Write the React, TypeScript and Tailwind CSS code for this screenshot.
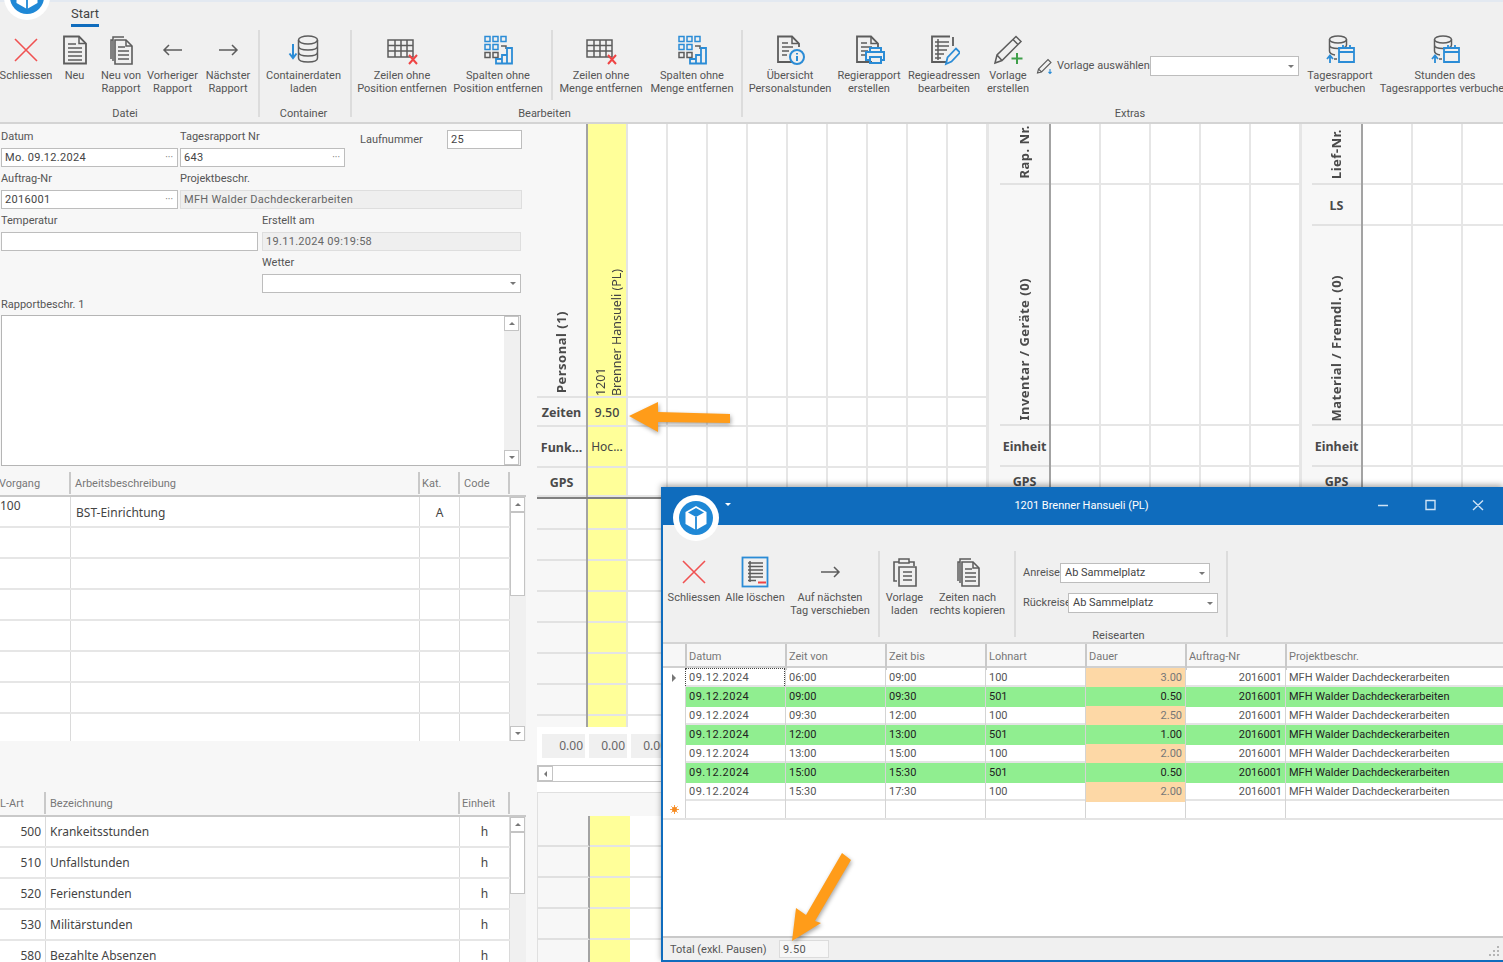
import React from 'react';

const G = '#5c5c5c';
const B = '#2b8cd6';
const R = '#ef4444';

const Svg: React.FC<{ children: React.ReactNode }> = ({ children }) => (
  <svg viewBox="0 0 32 32" className="w-8 h-8" fill="none" stroke={G} strokeWidth="1.5">
    {children}
  </svg>
);

const CloseIcon = () => (
  <Svg>
    <path d="M5 5L27 27M27 5L5 27" stroke="#f05252" strokeWidth="1.6" />
  </Svg>
);

const DocIcon = () => (
  <Svg>
    <path d="M5 2.5H20L27 9.5V29.5H5Z" strokeWidth="1.8" />
    <path d="M20 2.5V9.5H27M9 10H17M9 14H23M9 18H23M9 22H23M9 26H23" />
  </Svg>
);

const DocCopyIcon = () => (
  <Svg>
    <path d="M6 25V6H8M8 27V3H19" />
    <path d="M10 6H21L27 12V30H10Z" strokeWidth="1.6" />
    <path d="M21 6V12H27M13 13H20M13 17H24M13 21H24M13 25H24" />
  </Svg>
);

const ArrowLeftIcon = () => (
  <Svg>
    <path d="M7 16H25M12 11L7 16L12 21" />
  </Svg>
);

const ArrowRightIcon = () => (
  <Svg>
    <path d="M7 16H25M20 11L25 16L20 21" />
  </Svg>
);

const Database = () => (
  <>
    <ellipse cx="20" cy="6" rx="9.5" ry="4" />
    <path d="M10.5 6V24C10.5 26.5 14.5 28 20 28S29.5 26.5 29.5 24V6M10.5 12C10.5 14.5 14.5 16 20 16S29.5 14.5 29.5 12M10.5 18C10.5 20.5 14.5 22 20 22S29.5 20.5 29.5 18" />
  </>
);

const ContainerIcon = () => (
  <Svg>
    <Database />
    <path d="M5 10V23M1.5 19.5L5 24L8.5 19.5" stroke={B} strokeWidth="2" />
  </Svg>
);

const GridXIcon = () => (
  <Svg>
    <path d="M2 6H27V23H2ZM2 11.5H27M2 17H27M9 6V23M15 6V23M21 6V23" />
    <path d="M23 21L31 30M31 21L23 30" stroke={R} strokeWidth="2" />
  </Svg>
);

const GridBarsIcon = () => (
  <Svg>
    <g stroke={B}>
      <rect x="3" y="2.5" width="5" height="5" />
      <rect x="11" y="2.5" width="5" height="5" />
      <rect x="19" y="2.5" width="5" height="5" />
      <rect x="3" y="10.5" width="5" height="5" />
      <rect x="11" y="10.5" width="5" height="5" />
      <rect x="3" y="18.5" width="5" height="5" stroke={G} />
      <rect x="11" y="18.5" width="5" height="5" stroke={G} />
      <path d="M19 12H24V15" stroke={G} />
      <path d="M14 29.5H30V14H25V21H20V25H14Z M20 25V29.5M25 21V29.5" strokeWidth="1.8" />
    </g>
  </Svg>
);

const PageBase = () => (
  <>
    <path d="M19 28H4V2.5H18L25 9.5V13" strokeWidth="1.8" />
    <path d="M18 2.5V9.5H25M8 9H14M8 13H19M8 17H15M8 21H13" />
  </>
);

const InfoDocIcon = () => (
  <Svg>
    <PageBase />
    <circle cx="23" cy="23" r="7" stroke={B} strokeWidth="2" />
    <path d="M23 22V27M23 19V20.5" stroke={B} strokeWidth="2" />
  </Svg>
);

const PrintDocIcon = () => (
  <Svg>
    <PageBase />
    <path d="M17 18V14H28V18M17 26H13V18H31V26H28M17 23H28V29H17Z" stroke={B} strokeWidth="2" />
  </Svg>
);

const EditDocIcon = () => (
  <Svg>
    <path d="M22 2.5H4V28H18M25 3V12" strokeWidth="1.8" />
    <path d="M7 8H21M7 12H21M7 16H19M7 20H16M7 24H13M10 5V26" />
    <path d="M18 30L19.5 23.5L28 14.5L32 18.5L23.5 27.5Z" stroke={B} strokeWidth="1.8" />
  </Svg>
);

const PencilPlusIcon = () => (
  <Svg>
    <path d="M3 29L5 21L24 2.5L29 7.5L10 26.5ZM5 21L10 26.5M21 5.5L26 10.5" />
    <path d="M25 19V30M19.5 24.5H30.5" stroke="#3f9f4a" strokeWidth="2" />
  </Svg>
);

const SmallPencilIcon = () => (
  <svg viewBox="0 0 18 18" className="w-[18px] h-[18px] shrink-0" fill="none" stroke={G} strokeWidth="1.1">
    <path d="M1.5 16L2.5 12L12 2.5L15 5.5L5.5 15ZM2.5 12L5.5 15" />
    <path d="M14 12V16.5M12.5 15L14 16.5L15.5 15" stroke={B} />
  </svg>
);

const DbCalendarIcon = () => (
  <Svg>
    <ellipse cx="14" cy="5.5" rx="8.5" ry="3.5" />
    <path d="M5.5 5.5V17C5.5 19 8 20.5 11 21M22.5 5.5V11M5.5 11C5.5 13 9 14.5 14 14.5S22.5 13 22.5 11" />
    <path d="M15 14H30V28H15ZM15 18H30M19 11V15M26 11V15" stroke={B} strokeWidth="1.8" />
    <path d="M6 22V29M3 25L6 21.5L9 25" stroke={B} strokeWidth="1.8" />
    <path d="M10 25H13" />
  </Svg>
);

const ListMinusIcon = () => (
  <Svg>
    <rect x="3.5" y="1.5" width="25" height="29" stroke={B} strokeWidth="1.8" />
    <path d="M9 7H24M9 10.5H24M9 14H24M9 17.5H24M9 21H24M9 24.5H17M11 5V26" />
    <path d="M19 26.5H27" stroke={R} strokeWidth="2" />
  </Svg>
);

const ClipboardIcon = () => (
  <Svg>
    <path d="M8 25H5V6H10M20 6H25V10" strokeWidth="1.6" />
    <path d="M10 7V3H20V7Z" />
    <path d="M10 11H27V30H10Z" strokeWidth="1.6" />
    <path d="M14 16H23M14 20H23M14 24H23" />
  </Svg>
);

const AppLogo = () => (
  <svg viewBox="0 0 46 46" className="w-[46px] h-[46px]">
    <circle cx="23" cy="23" r="23" fill="#fff" />
    <circle cx="23" cy="23" r="17" fill="#1f88d6" />
    <path d="M23 11L33.5 17V29L23 35L12.5 29V17Z" fill="#fff" />
    <path d="M23 13L31 17.5L23 22L15 17.5Z" fill="#1f88d6" />
    <path d="M23 22V35" stroke="#1f88d6" strokeWidth="1.8" />
  </svg>
);

const Sep: React.FC<{ className?: string }> = ({ className = 'h-[87px]' }) => (
  <div className={`w-[2px] shrink-0 bg-[#dcdcdc] ${className}`} />
);

const RibbonButton: React.FC<{ icon: React.ReactNode; lines: string[]; className: string }> = ({ icon, lines, className }) => (
  <div className={`flex flex-col items-center shrink-0 whitespace-nowrap ${className}`}>
    <div className="h-8 flex items-center justify-center">{icon}</div>
    <div className="mt-[3px] leading-[13px] text-center text-[#555]">
      {lines.map((l) => (
        <div key={l}>{l}</div>
      ))}
    </div>
  </div>
);

const GroupLabel: React.FC<{ className?: string; children: React.ReactNode }> = ({ className = '', children }) => (
  <div className={`h-[17px] leading-[17px] text-center text-[#555] ${className}`}>{children}</div>
);

const Combo: React.FC<{ value?: string; className: string }> = ({ value, className }) => (
  <div className={`flex items-center justify-between bg-white border border-[#bdbdbd] px-[4px] text-[#444] ${className}`}>
    <span>{value}</span>
    <span className="w-0 h-0 border-x-[3px] border-x-transparent border-t-[3px] border-t-[#777]" />
  </div>
);

const Ribbon = () => (
  <div className="h-[124px] bg-[#f0f0f0] border-b-2 border-[#d4d4d4] overflow-hidden shrink-0">
    <div className="h-[2px] bg-[#e3e9f1]" />
    <div className="h-[28px] pl-[71px]">
      <div className="inline-block text-[13px] leading-[20px] mt-[2px] text-[#444] border-b-[3px] border-[#0f6cbd]">Start</div>
    </div>
    <div className="flex w-[1560px]">
      <div className="w-[258px] shrink-0">
        <div className="flex h-[71px] pt-[4px]">
          <RibbonButton className="w-[52px]" icon={<CloseIcon />} lines={['Schliessen']} />
          <RibbonButton className="w-[45px]" icon={<DocIcon />} lines={['Neu']} />
          <RibbonButton className="w-[48px]" icon={<DocCopyIcon />} lines={['Neu von', 'Rapport']} />
          <RibbonButton className="w-[55px]" icon={<ArrowLeftIcon />} lines={['Vorheriger', 'Rapport']} />
          <RibbonButton className="w-[56px]" icon={<ArrowRightIcon />} lines={['Nächster', 'Rapport']} />
        </div>
        <div className="mt-[4px]"><GroupLabel className="w-[250px]">Datei</GroupLabel></div>
      </div>
      <Sep />
      <div className="w-[90px] shrink-0">
        <div className="h-[71px] pt-[4px]">
          <RibbonButton className="w-[87px]" icon={<ContainerIcon />} lines={['Containerdaten', 'laden']} />
        </div>
        <div className="mt-[4px]"><GroupLabel className="w-[87px]">Container</GroupLabel></div>
      </div>
      <Sep />
      <div className="w-[389px] shrink-0">
        <div className="flex h-[71px] pt-[4px]">
          <RibbonButton className="w-[100px]" icon={<GridXIcon />} lines={['Zeilen ohne', 'Position entfernen']} />
          <RibbonButton className="w-[92px]" icon={<GridBarsIcon />} lines={['Spalten ohne', 'Position entfernen']} />
          <div className="w-[7px]" />
          <Sep className="h-[70px] -mt-[4px]" />
          <RibbonButton className="w-[96px]" icon={<GridXIcon />} lines={['Zeilen ohne', 'Menge entfernen']} />
          <RibbonButton className="w-[86px]" icon={<GridBarsIcon />} lines={['Spalten ohne', 'Menge entfernen']} />
        </div>
        <div className="mt-[4px]"><GroupLabel className="w-[385px]">Bearbeiten</GroupLabel></div>
      </div>
      <Sep />
      <div className="w-[776px] shrink-0">
        <div className="flex h-[71px] pt-[4px] pl-[5px]">
          <RibbonButton className="w-[84px]" icon={<InfoDocIcon />} lines={['Übersicht', 'Personalstunden']} />
          <RibbonButton className="w-[74px]" icon={<PrintDocIcon />} lines={['Regierapport', 'erstellen']} />
          <RibbonButton className="w-[76px]" icon={<EditDocIcon />} lines={['Regieadressen', 'bearbeiten']} />
          <RibbonButton className="w-[52px]" icon={<PencilPlusIcon />} lines={['Vorlage', 'erstellen']} />
          <div className="w-[268px] shrink-0 flex items-center h-[20px] mt-[22px] pl-[2px] text-[#555]">
            <SmallPencilIcon />
            <span className="ml-[3px] w-[93px] whitespace-nowrap">Vorlage auswählen</span>
            <Combo className="w-[149px] h-[20px]" />
          </div>
          <RibbonButton className="w-[76px]" icon={<DbCalendarIcon />} lines={['Tagesrapport', 'verbuchen']} />
          <RibbonButton className="w-[134px]" icon={<DbCalendarIcon />} lines={['Stunden des', 'Tagesrapportes verbuchen']} />
        </div>
        <div className="mt-[4px]"><GroupLabel className="w-[774px]">Extras</GroupLabel></div>
      </div>
    </div>
  </div>
);

const FieldLabel: React.FC<{ children: React.ReactNode }> = ({ children }) => (
  <div className="h-[23px] pt-[2px] flex items-center whitespace-nowrap text-[#555]">{children}</div>
);

const Input: React.FC<{ value?: string; dots?: boolean; readOnly?: boolean; className?: string }> = ({ value, dots, readOnly, className = '' }) => (
  <div
    className={`h-[19px] flex items-center justify-between px-[3px] border tracking-[0.3px] leading-none whitespace-nowrap ${
      readOnly ? 'bg-[#efefef] border-[#dedede] text-[#666]' : 'bg-white border-[#bdbdbd] text-[#444]'
    } ${className}`}
  >
    <span>{value}</span>
    {dots && <span className="text-[#777] text-[10px] tracking-[0px] pr-[1px]">···</span>}
  </div>
);

const ScrollButton: React.FC<{ dir: 'up' | 'down' | 'left' }> = ({ dir }) => (
  <div className="w-[15px] h-[15px] shrink-0 bg-white border border-[#c4c4c4] flex items-center justify-center">
    {dir === 'up' && <span className="w-0 h-0 border-x-[3px] border-x-transparent border-b-[3px] border-b-[#777]" />}
    {dir === 'down' && <span className="w-0 h-0 border-x-[3px] border-x-transparent border-t-[3px] border-t-[#777]" />}
    {dir === 'left' && <span className="w-0 h-0 border-y-[3px] border-y-transparent border-r-[3px] border-r-[#777]" />}
  </div>
);

const VScroll: React.FC<{ thumb: string }> = ({ thumb }) => (
  <div className="w-[16px] shrink-0 bg-[#f0f0f0] flex flex-col">
    <ScrollButton dir="up" />
    <div className={`w-[15px] bg-white border border-[#c4c4c4] ${thumb}`} />
    <div className="flex-1" />
    <ScrollButton dir="down" />
  </div>
);

const HeadCell: React.FC<{ className: string; children?: React.ReactNode }> = ({ className, children }) => (
  <div className={`h-[22px] shrink-0 pl-[4px] border-r-2 border-[#c9c9c9] leading-[24px] text-[#777] whitespace-nowrap overflow-hidden ${className}`}>
    {children}
  </div>
);

const Cell: React.FC<{ className: string; children?: React.ReactNode }> = ({ className, children }) => (
  <div className={`h-full shrink-0 border-r border-[#dadada] flex items-center font-['Noto_Sans'] text-[12px] text-[#444] whitespace-nowrap ${className}`}>
    {children}
  </div>
);

const LeftPanel = () => {
  const emptyRows = [0, 1, 2, 3, 4, 5, 6];
  const lohnarten = [
    ['500', 'Krankeitsstunden'],
    ['510', 'Unfallstunden'],
    ['520', 'Ferienstunden'],
    ['530', 'Militärstunden'],
    ['580', 'Bezahlte Absenzen'],
  ];
  return (
    <div className="w-[537px] shrink-0 bg-[#f7f7f7] overflow-hidden">
      <div className="pl-[1px] pt-[1px]">
        <div className="flex h-[42px]">
          <div className="w-[177px]">
            <FieldLabel>Datum</FieldLabel>
            <Input value="Mo. 09.12.2024" dots />
          </div>
          <div className="w-[165px] ml-[2px]">
            <FieldLabel>Tagesrapport Nr</FieldLabel>
            <Input value="643" dots />
          </div>
          <div className="ml-[15px] w-[87px] pt-[5px] text-[#555] leading-[19px]">Laufnummer</div>
          <div className="pt-[5px]">
            <Input value="25" className="w-[75px]" />
          </div>
        </div>
        <div className="flex h-[42px]">
          <div className="w-[177px]">
            <FieldLabel>Auftrag-Nr</FieldLabel>
            <Input value="2016001" dots />
          </div>
          <div className="w-[342px] ml-[2px]">
            <FieldLabel>Projektbeschr.</FieldLabel>
            <Input value="MFH Walder Dachdeckerarbeiten" readOnly />
          </div>
        </div>
        <div className="flex h-[42px]">
          <div className="w-[257px]">
            <FieldLabel>Temperatur</FieldLabel>
            <Input />
          </div>
          <div className="w-[259px] ml-[4px]">
            <FieldLabel>Erstellt am</FieldLabel>
            <Input value="19.11.2024 09:19:58" readOnly />
          </div>
        </div>
        <div className="flex h-[42px]">
          <div className="w-[259px] ml-[261px]">
            <FieldLabel>Wetter</FieldLabel>
            <Combo className="h-[19px]" />
          </div>
        </div>
        <div className="-mb-[1px]">
          <FieldLabel>Rapportbeschr. 1</FieldLabel>
        </div>
        <div className="w-[520px] h-[151px] flex justify-end bg-white border border-[#b5b5b5]">
          <div className="w-[16px] bg-[#f0f0f0] flex flex-col justify-between">
            <ScrollButton dir="up" />
            <ScrollButton dir="down" />
          </div>
        </div>
      </div>

      <div className="mt-[6px] w-[526px]">
        <div className="flex h-[25px] border-b-2 border-[#c9c9c9]">
          <HeadCell className="w-[71px]"><span className="block -ml-[5px]">Vorgang</span></HeadCell>
          <HeadCell className="w-[349px]">Arbeitsbeschreibung</HeadCell>
          <HeadCell className="w-[40px]"><span className="block -ml-[2px]">Kat.</span></HeadCell>
          <HeadCell className="w-[50px]">Code</HeadCell>
        </div>
        <div className="flex h-[244px] overflow-hidden">
          <div className="w-[510px] shrink-0 bg-white">
            <div className="flex h-[31px] border-b-2 border-[#e6e6e6]">
              <Cell className="w-[71px] items-start">100</Cell>
              <Cell className="w-[349px] pl-[5px] pt-[2px]">BST-Einrichtung</Cell>
              <Cell className="w-[40px] justify-center pt-[2px]">A</Cell>
              <Cell className="w-[50px]" />
            </div>
            {emptyRows.map((r) => (
              <div key={r} className="flex h-[31px] border-b-2 border-[#e6e6e6]">
                <Cell className="w-[71px]" />
                <Cell className="w-[349px]" />
                <Cell className="w-[40px]" />
                <Cell className="w-[50px]" />
              </div>
            ))}
          </div>
          <VScroll thumb="h-[84px]" />
        </div>
      </div>

      <div className="mt-[51px] w-[526px]">
        <div className="flex h-[25px] border-b-2 border-[#c9c9c9]">
          <HeadCell className="w-[46px]"><span className="block -ml-[4px]">L-Art</span></HeadCell>
          <HeadCell className="w-[414px]">Bezeichnung</HeadCell>
          <HeadCell className="w-[50px]"><span className="block -ml-[2px]">Einheit</span></HeadCell>
        </div>
        <div className="flex h-[200px] overflow-hidden">
          <div className="w-[510px] shrink-0 bg-white">
            {lohnarten.map(([nr, name]) => (
              <div key={nr} className="flex h-[31px] border-b-2 border-[#e6e6e6]">
                <Cell className="w-[46px] justify-end pr-[4px]">{nr}</Cell>
                <Cell className="w-[414px] pl-[4px]">{name}</Cell>
                <Cell className="w-[50px] justify-center">h</Cell>
              </div>
            ))}
          </div>
          <VScroll thumb="h-[62px]" />
        </div>
      </div>
    </div>
  );
};

const BoldHead: React.FC<{ children: React.ReactNode }> = ({ children }) => (
  <span className="pt-[3px] font-['Noto_Sans'] font-bold text-[12.5px] text-[#4a4a4a] whitespace-nowrap">{children}</span>
);

const VerticalHead: React.FC<{ children: React.ReactNode }> = ({ children }) => (
  <span className="block [writing-mode:vertical-rl] rotate-180 font-['Noto_Sans'] font-bold text-[13px] tracking-[0.5px] text-[#4a4a4a] whitespace-nowrap">
    {children}
  </span>
);

interface BandRow {
  height: string;
  head: React.ReactNode;
  first?: React.ReactNode;
}

const Band: React.FC<{ headClass: string; stubClass?: string; colClass: string; cols: number; rows: BandRow[]; yellow?: boolean }> = ({
  headClass,
  stubClass = '',
  colClass,
  cols,
  rows,
  yellow,
}) => (
  <div className="shrink-0">
    {rows.map((row, i) => (
      <div key={i} className={`flex ${row.height}`}>
        <div className={`shrink-0 bg-[#f7f7f7] border-r-2 border-[#a3a3a3] ${headClass}`}>
          <div className={`h-full flex items-end justify-center border-b-2 border-[#e2e2e2] ${stubClass}`}>{row.head}</div>
        </div>
        {yellow && (
          <div className="w-[40px] shrink-0 bg-[#ffff99] border-r-2 border-b-2 border-[#e4e4e4] flex items-end justify-center">{row.first}</div>
        )}
        {Array.from({ length: cols }).map((_, c) => (
          <div key={c} className={`shrink-0 border-r-2 border-b-2 border-[#e6e6e6] ${colClass}`} />
        ))}
      </div>
    ))}
  </div>
);

const RightPanel = () => {
  const lower = [0, 1, 2, 3, 4, 5, 6, 7];
  return (
    <div className="flex-1 min-w-0 bg-white overflow-hidden flex flex-col">
      <div className="flex h-[373px] shrink-0">
        <Band
          yellow
          headClass="w-[51px]"
          colClass="w-[40px]"
          cols={9}
          rows={[
            {
              height: 'h-[274px]',
              head: <div className="pb-[3px]"><VerticalHead>Personal (1)</VerticalHead></div>,
              first: (
                <div className="block [writing-mode:vertical-rl] rotate-180 font-['Noto_Sans'] text-[12.5px] leading-[16px] text-[#444] whitespace-nowrap ml-[3px]">
                  <div>1201</div>
                  <div>Brenner Hansueli (PL)</div>
                </div>
              ),
            },
            { height: 'h-[29px]', head: <div className="h-full flex items-center"><BoldHead>Zeiten</BoldHead></div>, first: <div className="h-full pt-[3px] flex items-center font-['Noto_Sans'] font-medium text-[12.5px] text-[#444]">9.50</div> },
            { height: 'h-[41px]', head: <div className="h-full flex items-center"><BoldHead>Funk...</BoldHead></div>, first: <div className="h-full pt-[1px] flex items-center font-['Noto_Sans'] text-[12px] text-[#444]">Hoc...</div> },
            { height: 'h-[29px]', head: <div className="h-full flex items-center"><BoldHead>GPS</BoldHead></div> },
          ]}
        />
        <Band
          headClass="w-[63px] pl-[11px] border-l border-l-[#e6e6e6]"
          colClass="w-[50px]"
          cols={5}
          rows={[
            { height: 'h-[61px]', head: <div className="pb-[4px]"><VerticalHead>Rap. Nr.</VerticalHead></div> },
            { height: 'h-[241px]', head: <div className="pb-[3px]"><VerticalHead>Inventar / Geräte (0)</VerticalHead></div> },
            { height: 'h-[41px]', head: <div className="h-full flex items-center"><BoldHead>Einheit</BoldHead></div> },
            { height: 'h-[30px]', head: <div className="h-full flex items-center"><BoldHead>GPS</BoldHead></div> },
          ]}
        />
        <Band
          headClass="w-[62px] pl-[10px] border-l border-l-[#e6e6e6]"
          colClass="w-[50px]"
          cols={3}
          rows={[
            { height: 'h-[61px]', head: <div className="pb-[4px]"><VerticalHead>Lief-Nr.</VerticalHead></div> },
            { height: 'h-[41px]', head: <div className="h-full flex items-center"><BoldHead>LS</BoldHead></div> },
            { height: 'h-[200px]', head: <div className="pb-[3px]"><VerticalHead>Material / Fremdl. (0)</VerticalHead></div> },
            { height: 'h-[41px]', head: <div className="h-full flex items-center"><BoldHead>Einheit</BoldHead></div> },
            { height: 'h-[30px]', head: <div className="h-full flex items-center"><BoldHead>GPS</BoldHead></div> },
          ]}
        />
      </div>
      <div className="h-[230px] overflow-hidden border-t-2 border-[#808080] shrink-0">
        <Band
          yellow
          headClass="w-[51px]"
          colClass="w-[40px]"
          cols={9}
          rows={lower.map(() => ({ height: 'h-[31px]', head: null }))}
        />
      </div>
      <div className="h-[65px] shrink-0 pt-[7px] pl-[5px]">
        <div className="flex gap-[4px] h-[24px] font-['Noto_Sans'] text-[12px] text-[#666]">
          <div className="w-[43px] bg-[#f0f0f0] text-right pr-[2px] leading-[24px]">0.00</div>
          <div className="w-[38px] bg-[#f0f0f0] text-right pr-[2px] leading-[24px]">0.00</div>
          <div className="w-[38px] bg-[#f0f0f0] text-right pr-[2px] leading-[24px]">0.00</div>
        </div>
        <div className="mt-[7px] -ml-[5px] h-[17px] border border-[#c4c4c4] flex">
          <ScrollButton dir="left" />
        </div>
      </div>
      <div className="flex-1 bg-[#f7f7f7] border-t border-l border-[#e0e0e0]">
        <div className="h-[23px]" />
        {[0, 1, 2, 3, 4].map((r) => (
          <div key={r} className="flex h-[31px]">
            <div className="w-[52px] shrink-0 border-b-2 border-[#e0e0e0] border-r-2 border-r-[#a3a3a3]" />
            <div className="w-[40px] shrink-0 bg-[#ffff99] border-b-2 border-[#e4e4e4]" />
            <div className="flex-1 bg-white border-b-2 border-[#e6e6e6]" />
          </div>
        ))}
      </div>
    </div>
  );
};

const rows = [
  { von: '06:00', bis: '09:00', art: '100', dauer: '3.00', pause: false },
  { von: '09:00', bis: '09:30', art: '501', dauer: '0.50', pause: true },
  { von: '09:30', bis: '12:00', art: '100', dauer: '2.50', pause: false },
  { von: '12:00', bis: '13:00', art: '501', dauer: '1.00', pause: true },
  { von: '13:00', bis: '15:00', art: '100', dauer: '2.00', pause: false },
  { von: '15:00', bis: '15:30', art: '501', dauer: '0.50', pause: true },
  { von: '15:30', bis: '17:30', art: '100', dauer: '2.00', pause: false },
];

const gridCols = 'grid grid-cols-[22px_100px_100px_100px_100px_100px_100px_1fr]';

const DetailWindow = () => (
  <div className="absolute left-[661px] top-[487px] w-[842px] h-[475px] flex flex-col bg-white border-l-2 border-b-2 border-[#0f6cbd] shadow-[0_-2px_6px_rgba(0,0,0,0.35)]">
    <div className="relative h-[38px] shrink-0 bg-[#0f6cbd] flex items-center justify-center text-white">
      <span className="-ml-[3px]">1201 Brenner Hansueli (PL)</span>
      <span className="absolute left-[62px] top-[16px] w-0 h-0 border-x-[3px] border-x-transparent border-t-[3px] border-t-white" />
      <svg viewBox="0 0 120 14" className="absolute right-[6px] top-[11px] w-[120px] h-[14px]" fill="none" stroke="#cfe3f5" strokeWidth="1.4">
        <path d="M1 7.5H11M49 2.5H58V11.5H49ZM96 2.5L106 12M106 2.5L96 12" />
      </svg>
    </div>
    <div className="absolute left-[10px] top-[8px]">
      <AppLogo />
    </div>
    <div className="h-[119px] shrink-0 bg-[#f0f0f0] border-b-2 border-[#d4d4d4] flex pt-[27px]">
      <div className="w-[215px] shrink-0 flex pt-[4px]">
        <RibbonButton className="w-[62px]" icon={<CloseIcon />} lines={['Schliessen']} />
        <RibbonButton className="w-[60px]" icon={<ListMinusIcon />} lines={['Alle löschen']} />
        <RibbonButton className="w-[90px]" icon={<ArrowRightIcon />} lines={['Auf nächsten', 'Tag verschieben']} />
      </div>
      <Sep className="h-[86px] -mt-[1px]" />
      <div className="w-[134px] shrink-0 flex pt-[4px]">
        <RibbonButton className="w-[49px]" icon={<ClipboardIcon />} lines={['Vorlage', 'laden']} />
        <RibbonButton className="w-[77px]" icon={<DocCopyIcon />} lines={['Zeiten nach', 'rechts kopieren']} />
      </div>
      <Sep className="h-[86px] -mt-[1px]" />
      <div className="w-[210px] shrink-0 pl-[7px] text-[#555]">
        <div className="flex items-center h-[20px] mt-[11px]">
          <span className="w-[37px]">Anreise</span>
          <Combo value="Ab Sammelplatz" className="w-[150px] h-[20px]" />
        </div>
        <div className="flex items-center h-[20px] mt-[10px]">
          <span className="w-[45px]">Rückreise</span>
          <Combo value="Ab Sammelplatz" className="w-[150px] h-[20px]" />
        </div>
        <div className="mt-[16px] pr-[12px] text-center leading-[13px]">Reisearten</div>
      </div>
      <Sep className="h-[86px] -mt-[1px]" />
    </div>
    <div className={`${gridCols} h-[24px] shrink-0 bg-[#f7f7f7] border-b-2 border-[#d0d0d0] text-[#777]`}>
      <div />
      {['Datum', 'Zeit von', 'Zeit bis', 'Lohnart', 'Dauer', 'Auftrag-Nr', 'Projektbeschr.'].map((h) => (
        <div key={h} className="pl-[2px] leading-[26px] border-l-2 border-[#c9c9c9]">
          {h}
        </div>
      ))}
    </div>
    <div className="flex-1 text-[#555]">
      {rows.map((r, i) => {
        const bg = r.pause ? 'bg-[#90ee90]' : '';
        return (
          <div key={i} className={`${gridCols} h-[19px] leading-[20px] border-b-2 border-[#e4e4e4] ${r.pause ? 'text-[#222]' : ''}`}>
            <div className="flex items-center justify-center bg-white">
              {i === 0 && <span className="w-0 h-0 border-y-[4px] border-y-transparent border-l-[4px] border-l-[#777]" />}
            </div>
            <div className={`pl-[3px] tracking-[0.5px] ${i === 0 ? 'border border-dotted border-[#444] leading-[17px]' : `border-l border-[#d4d4d4] ${bg}`}`}>09.12.2024</div>
            <div className={`pl-[3px] border-l border-[#d4d4d4] ${bg}`}>{r.von}</div>
            <div className={`pl-[3px] border-l border-[#d4d4d4] ${bg}`}>{r.bis}</div>
            <div className={`pl-[3px] border-l border-[#d4d4d4] ${bg}`}>{r.art}</div>
            <div className={`pr-[3px] text-right border-l border-[#d4d4d4] ${r.pause ? 'bg-[#90ee90]' : 'bg-[#fdd8a6] text-[#777]'}`}>{r.dauer}</div>
            <div className={`pr-[3px] text-right border-l border-[#d4d4d4] ${bg}`}>2016001</div>
            <div className={`pl-[3px] border-l border-[#d4d4d4] ${bg}`}>MFH Walder Dachdeckerarbeiten</div>
          </div>
        );
      })}
      <div className={`${gridCols} h-[19px] border-b-2 border-[#e4e4e4]`}>
        <div className="flex items-center justify-center">
          <svg viewBox="0 0 10 10" className="w-[9px] h-[9px]" stroke="#f58a1f" fill="#f58a1f" strokeWidth="0.9">
            <circle cx="5" cy="5" r="2.4" />
            <path d="M5 0V10M0 5H10M1.5 1.5L8.5 8.5M8.5 1.5L1.5 8.5" />
          </svg>
        </div>
        {[0, 1, 2, 3, 4, 5, 6].map((c) => (
          <div key={c} className="border-l border-[#d4d4d4]" />
        ))}
      </div>
    </div>
    <div className="h-[24px] shrink-0 bg-[#f0f0f0] border-t-2 border-[#c9c9c9] flex items-center pl-[7px] text-[#555] relative">
      <span className="w-[109px] pt-[2px]">Total (exkl. Pausen)</span>
      <div className="w-[50px] h-[18px] bg-[#f7f7f7] border border-[#dcdcdc] pl-[3px] leading-[18px] tracking-[0.4px]">9.50</div>
      <svg viewBox="0 0 12 12" className="absolute right-[3px] bottom-[3px] w-[12px] h-[12px]" fill="#b5b5b5">
        <path d="M9 1H11V3H9ZM5 5H7V7H5ZM9 5H11V7H9ZM1 9H3V11H1ZM5 9H7V11H5ZM9 9H11V11H9Z" />
      </svg>
    </div>
  </div>
);

// die beiden orangen Pfeile liegen im Original über allem
const Arrows = () => (
  <svg viewBox="0 0 1503 962" className="absolute left-0 top-0 w-[1503px] h-[962px] pointer-events-none drop-shadow-[1px_2px_2px_rgba(0,0,0,0.35)]">
    <path d="M629 416L658 402L658 412L730 414L730 423L658 422L658 432Z" fill="#ff9c19" />
    <path d="M792 941L796 908L806 915L842 853L851 860L815 921L821 923Z" fill="#ff9c19" />
  </svg>
);

export default function App() {
  return (
    <div className="relative w-[1503px] h-[962px] overflow-hidden flex flex-col bg-[#f7f7f7] font-['Roboto',sans-serif] text-[11px]">
      <Ribbon />
      <div className="absolute left-[4px] -top-[26px]">
        <AppLogo />
      </div>
      <div className="flex flex-1 min-h-0">
        <LeftPanel />
        <RightPanel />
      </div>
      <DetailWindow />
      <Arrows />
    </div>
  );
}
